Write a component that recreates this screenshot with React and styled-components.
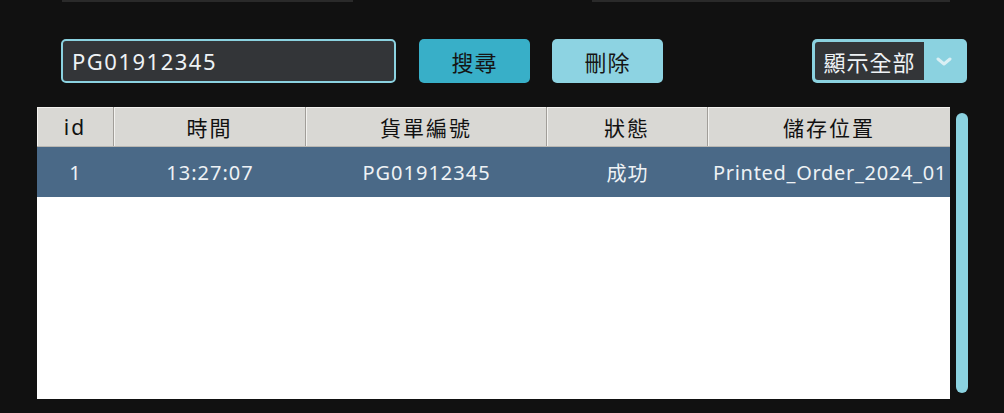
import React from 'react';
import styled, { createGlobalStyle } from 'styled-components';

const GlobalStyle = createGlobalStyle`
body {
  margin: 0;
  background-color: #111111;
  font-family: "Noto Sans", "Noto Sans CJK TC", sans-serif;
}
`

const Page = styled.div`
width: 1004px;
height: 413px;
background-color: #111111;
overflow: hidden;
`

const TopStrip = styled.div`
display: flex;
height: 2px;
padding-left: 62px;
gap: 239px;
`

const Stub = styled.div`
width: ${p => p.w}px;
height: 2px;
background-color: #2a2a2a;
`

const Toolbar = styled.div`
display: flex;
align-items: center;
height: 44px;
margin-top: 37px;
padding: 0 37px 0 61px;
`

const SearchInput = styled.input`
box-sizing: border-box;
width: 335px;
height: 44px;
background-color: #333538;
border: 2px solid #8bd2e0;
border-radius: 5px;
color: #eef2f5;
font-family: "Noto Sans", "Noto Sans CJK TC", sans-serif;
font-size: 22px;
letter-spacing: 1.5px;
padding: 0 9px;
outline: none;
`

const Button = styled.button`
box-sizing: border-box;
width: 111px;
height: 44px;
margin-left: ${p => p.gap}px;
border: none;
border-radius: 5px;
background-color: ${p => p.bg};
color: #151515;
font-family: "Noto Sans CJK TC", sans-serif;
font-size: 22px;
letter-spacing: 1px;
padding: 0;
`

const Select = styled.div`
box-sizing: border-box;
display: flex;
align-items: center;
width: 155px;
height: 44px;
margin-left: auto;
padding: 3px;
background-color: #8bd2e0;
border-radius: 5px;
`

const SelectValue = styled.div`
display: flex;
align-items: center;
justify-content: center;
width: 109px;
height: 38px;
background-color: #333538;
border-radius: 3px 0 0 3px;
color: #eef2f5;
font-family: "Noto Sans CJK TC", sans-serif;
font-size: 22px;
letter-spacing: 1px;
`

const Chevron = styled.div`
flex: 1;
display: flex;
justify-content: center;
align-items: center;
padding-top: 2px;
`

const TableArea = styled.div`
display: flex;
gap: 6px;
margin-top: 24px;
padding-left: 37px;
`

const Table = styled.div`
width: 913px;
height: 292px;
background-color: #ffffff;
overflow: hidden;
`

const HeaderRow = styled.div`
display: grid;
grid-template-columns: 77px 192px 241px 161px 242px;
height: 40px;
background-color: #d9d8d4;
border-bottom: 1px solid #b9b7b2;
box-sizing: border-box;
`

const HeaderCell = styled.div`
display: flex;
align-items: center;
justify-content: center;
border-right: 1px solid #a19e99;
box-shadow: inset 1px 1px 0 #f3f2ef;
color: #111111;
font-family: "Noto Sans", "Noto Sans CJK TC", sans-serif;
font-size: 21px;
letter-spacing: 2px;
&:last-child {
  border-right: none;
}
`

const DataRow = styled.div`
display: grid;
grid-template-columns: 77px 192px 241px 161px 242px;
height: 50px;
background-color: #4a6987;
`

const Cell = styled.div`
display: flex;
align-items: center;
justify-content: ${p => (p.left ? 'flex-start' : 'center')};
padding-left: ${p => (p.left ? '5px' : '0')};
color: #eef2f5;
font-size: 20px;
letter-spacing: ${p => (p.left ? '0.7px' : '1px')};
white-space: nowrap;
overflow: hidden;
`

const ScrollBar = styled.div`
width: 12px;
height: 280px;
margin-top: 6px;
background-color: #8bd2e0;
border-radius: 6px;
`

const columns = ['id', '時間', '貨單編號', '狀態', '儲存位置']

const rows = [
  { id: 1, time: '13:27:07', order: 'PG01912345', status: '成功', path: 'Printed_Order_2024_01' },
]

const App = () => {
  return (
    <Page>
      <GlobalStyle />
      <TopStrip>
        <Stub w={291} />
        <Stub w={358} />
      </TopStrip>
      <Toolbar>
        <SearchInput defaultValue="PG01912345" />
        <Button gap={23} bg="#38afc8">搜尋</Button>
        <Button gap={22} bg="#8dd3e2">刪除</Button>
        <Select>
          <SelectValue>顯示全部</SelectValue>
          <Chevron>
            <svg width="16" height="10" viewBox="0 0 16 10">
              <path d="M2 2 L8 7 L14 2" fill="none" stroke="#e8f4f7" strokeOpacity="0.85" strokeWidth="3" strokeLinecap="round" strokeLinejoin="round" />
            </svg>
          </Chevron>
        </Select>
      </Toolbar>
      <TableArea>
        <Table>
          <HeaderRow>
            {columns.map(c => <HeaderCell key={c}>{c}</HeaderCell>)}
          </HeaderRow>
          {rows.map(r => (
            <DataRow key={r.id}>
              <Cell>{r.id}</Cell>
              <Cell>{r.time}</Cell>
              <Cell>{r.order}</Cell>
              <Cell>{r.status}</Cell>
              <Cell left>{r.path}</Cell>
            </DataRow>
          ))}
        </Table>
        <ScrollBar />
      </TableArea>
    </Page>
  )
}

export default App
